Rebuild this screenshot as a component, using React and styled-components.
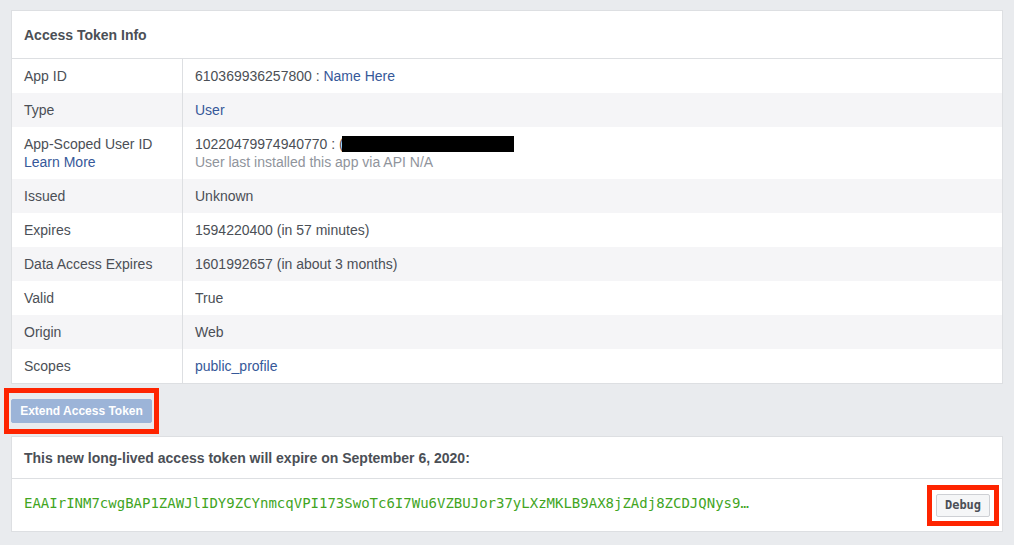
import React from "react";
import styled, { createGlobalStyle } from "styled-components";

const TOKEN =
  "EAAIrINM7cwgBAP1ZAWJlIDY9ZCYnmcqVPI173SwoTc6I7Wu6VZBUJor37yLXzMKLB9AX8jZAdj8ZCDJQNys9…";

const getRows = () => [
  { label: "App ID", value: <>610369936257800 : <Link>Name Here</Link></> },
  { label: "Type", value: <Link>User</Link> },
  {
    label: (
      <>
        App-Scoped User ID
        <br />
        <Link>Learn More</Link>
      </>
    ),
    value: (
      <>
        10220479974940770 : (<Redacted />
        <br />
        <Muted>User last installed this app via API N/A</Muted>
      </>
    ),
  },
  { label: "Issued", value: "Unknown" },
  { label: "Expires", value: "1594220400 (in 57 minutes)" },
  { label: "Data Access Expires", value: "1601992657 (in about 3 months)" },
  { label: "Valid", value: "True" },
  { label: "Origin", value: "Web" },
  { label: "Scopes", value: <Link>public_profile</Link> },
];

const App = () => {
  const rows = getRows();
  return (
    <Page>
      <GlobalStyle />
      <Card>
        <CardHeader>Access Token Info</CardHeader>
        <InfoTable>
          {rows.map((row, i) => (
            <Row key={i} $shaded={i % 2 === 1}>
              <Label>{row.label}</Label>
              <Value>{row.value}</Value>
            </Row>
          ))}
        </InfoTable>
      </Card>

      <Actions>
        <Highlight $pad="6px 2px">
          <ExtendBtn disabled>Extend Access Token</ExtendBtn>
        </Highlight>
      </Actions>

      <Card>
        <CardHeader $compact>
          This new long-lived access token will expire on September 6, 2020:
        </CardHeader>
        <TokenRow>
          <Token>{TOKEN}</Token>
          <Highlight $pad="4px">
            <DebugBtn>Debug</DebugBtn>
          </Highlight>
        </TokenRow>
      </Card>
    </Page>
  );
};

export default App;

const GlobalStyle = createGlobalStyle`
  html, body {
    margin: 0;
    padding: 0;
    background: #e9ebee;
  }
  body {
    font-family: "Liberation Sans", Arial, Helvetica, sans-serif;
    font-size: 14px;
    color: #4b4f56;
  }
`;

const Page = styled.div`
  width: 1014px;
  height: 545px;
  box-sizing: border-box;
  padding: 10px 11px 0;
  overflow: hidden;
`;

const Card = styled.div`
  background: #fff;
  border: 1px solid #dddfe2;
`;

const CardHeader = styled.div`
  height: ${(p) => (p.$compact ? "41px" : "47px")};
  display: flex;
  align-items: center;
  padding: 0 12px;
  border-bottom: 1px solid #dddfe2;
  font-weight: bold;
  font-size: 14px;
  color: #4b4f56;
`;

const InfoTable = styled.div`
  display: flex;
  flex-direction: column;
`;

const Row = styled.div`
  display: grid;
  grid-template-columns: 171px 1fr;
  background: ${(p) => (p.$shaded ? "#f5f5f7" : "#fff")};
  line-height: 18px;
`;

const Label = styled.div`
  padding: 8px 12px;
  border-right: 1px solid #dddfe2;
  color: #4b4f56;
`;

const Value = styled.div`
  padding: 8px 12px;
  color: #4b4f56;
  white-space: nowrap;
`;

const Link = styled.a`
  color: #365899;
  text-decoration: none;
  cursor: pointer;
`;

const Muted = styled.span`
  color: #90949c;
`;

const Redacted = styled.span`
  display: inline-block;
  width: 172px;
  height: 16px;
  margin-left: -2px;
  background: #000;
  vertical-align: -3px;
`;

const Actions = styled.div`
  display: flex;
  margin: 4px 0 2px -7px;
`;

const Highlight = styled.span`
  display: inline-flex;
  border: 5px solid #fe2400;
  padding: ${(p) => p.$pad};
  background: transparent;
`;

const ExtendBtn = styled.button`
  height: 24px;
  width: 141px;
  padding: 0 8px;
  background: #9cb4d8;
  border: 1px solid #9cb4d8;
  border-radius: 2px;
  color: #fff;
  font-family: "Liberation Sans", Arial, sans-serif;
  font-weight: bold;
  font-size: 12px;
  cursor: default;
`;

const TokenRow = styled.div`
  height: 52px;
  display: flex;
  align-items: center;
  justify-content: space-between;
  padding: 0 3px 0 12px;
`;

const Token = styled.div`
  padding-bottom: 4px;
  font-family: "DejaVu Sans Mono", Menlo, monospace;
  font-size: 14px;
  color: #42a51f;
  white-space: nowrap;
`;

const DebugBtn = styled.button`
  width: 54px;
  height: 23px;
  padding: 0;
  background: #f5f6f7;
  border: 1px solid #ced0d4;
  border-radius: 2px;
  color: #4b4f56;
  font-family: "DejaVu Sans Mono", Menlo, monospace;
  font-weight: bold;
  font-size: 12px;
  cursor: pointer;
`;
